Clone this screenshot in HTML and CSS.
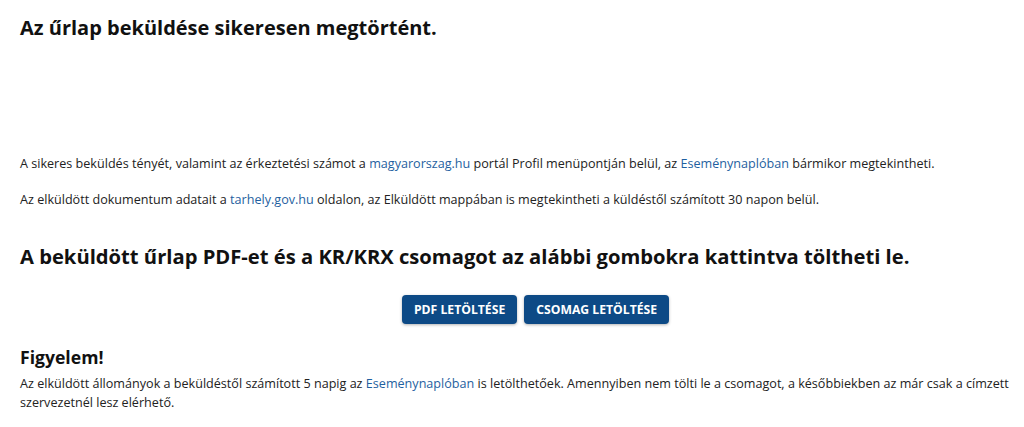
FILE: index.html
```html
<html>
<head>
    <meta charset="utf-8">
    <link rel="stylesheet" href="styles.css">
    <title>Űrlap beküldése</title>
</head>
<body>
<div class="container">
    <h1>Az űrlap beküldése sikeresen megtörtént.</h1>

    <p class="first">A sikeres beküldés tényét, valamint az érkeztetési számot a <a href="#">magyarorszag.hu</a> portál
        Profil menüpontján belül, az <a href="#">Eseménynaplóban</a> bármikor megtekintheti.</p>
    <p>Az elküldött dokumentum adatait a <a href="#">tarhely.gov.hu</a> oldalon, az Elküldött mappában is
        megtekintheti a küldéstől számított 30 napon belül.</p>

    <h2>A beküldött űrlap PDF-et és a KR/KRX csomagot az alábbi gombokra kattintva töltheti le.</h2>

    <div class="buttons">
        <button type="button">PDF letöltése</button>
        <button type="button">Csomag letöltése</button>
    </div>

    <h3>Figyelem!</h3>
    <p class="note">Az elküldött állományok a beküldéstől számított 5 napig az <a href="#">Eseménynaplóban</a> is
        letölthetőek. Amennyiben nem tölti le a csomagot, a későbbiekben az már csak a címzett szervezetnél lesz
        elérhető.</p>
</div>
</body>
</html>
```

FILE: styles.css
```css
body {
    font-family: "Open Sans", sans-serif;
    color: #222;
    background: #fff;
    margin: 0;
}

.container {
    padding: 14px 10px 0 20px;
}

h1 {
    font-size: 20px;
    font-weight: bold;
    color: #111;
    margin: 0;
    line-height: 28px;
}

p {
    font-size: 12.6px;
    line-height: 19px;
    margin: 0 0 17px 0;
}

p.first {
    margin-top: 112px;
}

a {
    color: #1f5fa0;
    text-decoration: none;
}

h2 {
    font-size: 20.2px;
    font-weight: bold;
    color: #111;
    margin: 33px 0 0 0;
    line-height: 28px;
}

.buttons {
    display: flex;
    justify-content: center;
    gap: 7px;
    margin-top: 25px;
    padding-left: 37px;
}

button {
    font-family: "Open Sans", sans-serif;
    font-size: 12.2px;
    font-weight: bold;
    text-transform: uppercase;
    color: #fff;
    background: #0d4a86;
    border: 0;
    border-radius: 4px;
    height: 29px;
    padding: 0 12px;
    box-shadow: 0 1px 3px rgba(0, 0, 0, 0.3);
}

h3 {
    font-size: 17.6px;
    font-weight: bold;
    color: #111;
    margin: 21px 0 5px 0;
    line-height: 24px;
}

p.note {
    margin: 0;
}
```
